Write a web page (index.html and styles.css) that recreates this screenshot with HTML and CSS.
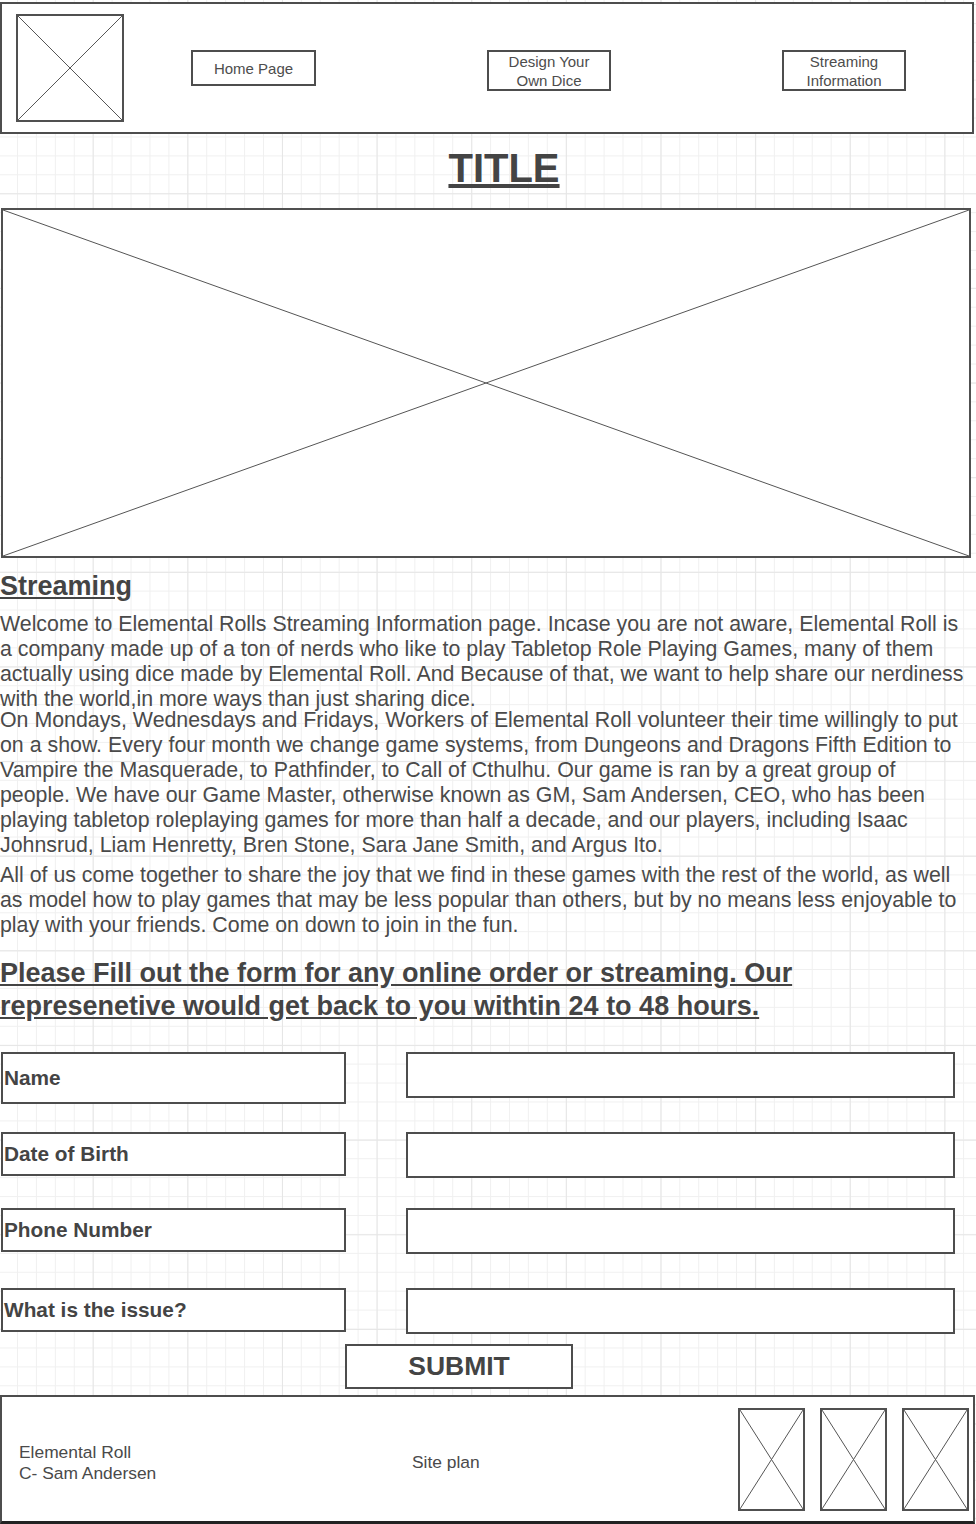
FILE: index.html
```html
<!DOCTYPE html>
<html lang="en">

<head>
  <meta charset="UTF-8">
  <meta name="viewport" content="width=device-width, initial-scale=1.0">
  <title>Elemental Roll - Streaming Information</title>
  <link rel="stylesheet" href="styles.css">
</head>

<body>
  <header class="topbar">
    <div class="logo placeholder">
      <svg viewBox="0 0 100 100" preserveAspectRatio="none">
        <line x1="0" y1="0" x2="100" y2="100" />
        <line x1="100" y1="0" x2="0" y2="100" />
      </svg>
    </div>
    <nav class="nav">
      <a href="#" class="nav-btn nav-single">Home Page</a>
      <a href="#" class="nav-btn">Design Your<br>Own Dice</a>
      <a href="#" class="nav-btn">Streaming<br>Information</a>
    </nav>
  </header>

  <h1 class="title">TITLE</h1>

  <div class="hero placeholder">
    <svg viewBox="0 0 100 100" preserveAspectRatio="none">
      <line x1="0" y1="0" x2="100" y2="100" />
      <line x1="100" y1="0" x2="0" y2="100" />
    </svg>
  </div>

  <section class="about">
    <h2 class="section-title">Streaming</h2>
    <p>Welcome to Elemental Rolls Streaming Information page. Incase you are not aware, Elemental Roll is a company made up of a ton of nerds who like to play Tabletop Role Playing Games, many of them actually using dice made by Elemental Roll. And Because of that, we want to help share our nerdiness with the world,in more ways than just sharing dice.</p>
    <p class="tight">On Mondays, Wednesdays and Fridays, Workers of Elemental Roll volunteer their time willingly to put on a show. Every four month we change game systems, from Dungeons and Dragons Fifth Edition to Vampire the Masquerade, to Pathfinder, to Call of Cthulhu. Our game is ran by a great group of people. We have our Game Master, otherwise known as GM, Sam Andersen, CEO, who has been playing tabletop roleplaying games for more than half a decade, and our players, including Isaac Johnsrud, Liam Henretty, Bren Stone, Sara Jane Smith, and Argus Ito.</p>
    <p class="spaced">All of us come together to share the joy that we find in these games with the rest of the world, as well as model how to play games that may be less popular than others, but by no means less enjoyable to play with your friends. Come on down to join in the fun.</p>
  </section>

  <section class="contact">
    <h2 class="section-title form-title">Please Fill out the form for any online order or streaming. Our represenetive would get back to you withtin 24 to 48 hours.</h2>
    <form class="contact-form">
      <label for="name" class="field-label first">Name</label>
      <input type="text" id="name" class="field-input">

      <label for="dob" class="field-label">Date of Birth</label>
      <input type="text" id="dob" class="field-input">

      <label for="phone" class="field-label">Phone Number</label>
      <input type="tel" id="phone" class="field-input">

      <label for="issue" class="field-label">What is the issue?</label>
      <input type="text" id="issue" class="field-input">

      <button type="submit" class="submit">SUBMIT</button>
    </form>
  </section>

  <footer class="footer">
    <div class="company">Elemental Roll<br>C- Sam Andersen</div>
    <a href="#" class="site-plan">Site plan</a>
    <div class="socials">
      <div class="social placeholder">
        <svg viewBox="0 0 100 100" preserveAspectRatio="none">
          <line x1="0" y1="0" x2="100" y2="100" />
          <line x1="100" y1="0" x2="0" y2="100" />
        </svg>
      </div>
      <div class="social placeholder">
        <svg viewBox="0 0 100 100" preserveAspectRatio="none">
          <line x1="0" y1="0" x2="100" y2="100" />
          <line x1="100" y1="0" x2="0" y2="100" />
        </svg>
      </div>
      <div class="social placeholder">
        <svg viewBox="0 0 100 100" preserveAspectRatio="none">
          <line x1="0" y1="0" x2="100" y2="100" />
          <line x1="100" y1="0" x2="0" y2="100" />
        </svg>
      </div>
    </div>
  </footer>
</body>

</html>
```

FILE: styles.css
```css
body {
  margin: 0;
  width: 976px;
  font-family: "Liberation Sans", Arial, sans-serif;
  color: #4a4a4a;
  background-color: #fff;
  /* wireframe grid: major lines every 5 cells */
  background-image:
    linear-gradient(to right, #e6e6e6 1px, transparent 1px),
    linear-gradient(to bottom, #e6e6e6 1px, transparent 1px),
    linear-gradient(to right, #f0f0f0 1px, transparent 1px),
    linear-gradient(to bottom, #f0f0f0 1px, transparent 1px);
  background-size: 94.65px 94.65px, 94.65px 94.65px, 18.93px 18.93px, 18.93px 18.93px;
  background-position: 92.7px 0, 0 4px, 17px 0, 0 4px;
}

a {
  color: inherit;
  text-decoration: none;
}

/* X-box image placeholders */
.placeholder {
  box-sizing: border-box;
  border: 2px solid #505050;
  background-color: #fff;
}

.placeholder svg {
  display: block;
  width: 100%;
  height: 100%;
}

.placeholder line {
  stroke: #555;
  stroke-width: 1;
  vector-effect: non-scaling-stroke;
}

/* Header */
.topbar {
  box-sizing: border-box;
  display: flex;
  align-items: flex-start;
  width: 974px;
  height: 132px;
  margin-top: 2px;
  padding: 10px 0 0 14px;
  border: 2px solid #4d4d4d;
  background-color: #fff;
}

.logo {
  width: 108px;
  height: 108px;
}

.nav {
  display: flex;
  gap: 171px;
  margin: 36px 0 0 67px;
}

.nav-btn {
  box-sizing: border-box;
  display: flex;
  align-items: center;
  justify-content: center;
  width: 124px;
  height: 41px;
  border: 2px solid #4d4d4d;
  background-color: #fff;
  font-size: 15px;
  line-height: 19px;
  text-align: center;
  color: #4d4d4d;
}

.nav-single {
  width: 125px;
  height: 36px;
}

/* Title + hero */
.title {
  margin: 10px 0 16px;
  padding-left: 32px;
  font-size: 40px;
  line-height: 48px;
  text-align: center;
  text-decoration: underline;
  color: #444;
}

.hero {
  width: 970px;
  height: 350px;
  margin-left: 1px;
}

/* Streaming text */
.section-title {
  margin: 12px 0 0;
  font-size: 27px;
  line-height: 32px;
  text-decoration: underline;
  color: #444;
}

.about p {
  width: 966px;
  margin: 9.5px 0 0;
  font-size: 21.35px;
  line-height: 25px;
}

.about p.tight {
  margin-top: -4px;
}

.about p.spaced {
  margin-top: 5.5px;
}

/* Contact form */
.form-title {
  width: 820px;
  margin-top: 19px;
  line-height: 33px;
}

.contact-form {
  display: grid;
  grid-template-columns: 345px 549px;
  grid-template-rows: 80px 76px 80px 46px;
  column-gap: 60px;
  align-items: start;
  margin: 28.5px 0 0 1px;
}

.field-label {
  box-sizing: border-box;
  display: flex;
  align-items: center;
  height: 44px;
  padding-left: 1px;
  border: 2px solid #4d4d4d;
  background-color: #fff;
  font-size: 20.8px;
  font-weight: bold;
  color: #444;
}

.field-label.first {
  height: 52px;
}

.field-input {
  box-sizing: border-box;
  width: 549px;
  height: 46px;
  margin: 0;
  border: 2px solid #4d4d4d;
  background-color: #fff;
  font: inherit;
}

.submit {
  grid-column: 1 / -1;
  justify-self: start;
  box-sizing: border-box;
  width: 228px;
  height: 45px;
  margin: 10px 0 0 344px;
  padding: 0;
  border: 2px solid #4d4d4d;
  background-color: #fff;
  font-family: inherit;
  font-size: 26.5px;
  font-weight: bold;
  color: #444;
  cursor: pointer;
}

/* Footer */
.footer {
  box-sizing: border-box;
  display: flex;
  align-items: center;
  width: 975px;
  height: 129px;
  margin-top: 6px;
  padding: 0 4px 0 17px;
  border: 2px solid #4d4d4d;
  border-bottom: 3px solid #222;
  background-color: #fff;
  font-size: 17.4px;
}

.company {
  width: 393px;
  line-height: 21px;
  padding-top: 8px;
}

.site-plan {
  padding-top: 7px;
}

.socials {
  display: flex;
  gap: 15px;
  margin-left: auto;
  padding-top: 2px;
}

.social {
  width: 67px;
  height: 103px;
}
```
